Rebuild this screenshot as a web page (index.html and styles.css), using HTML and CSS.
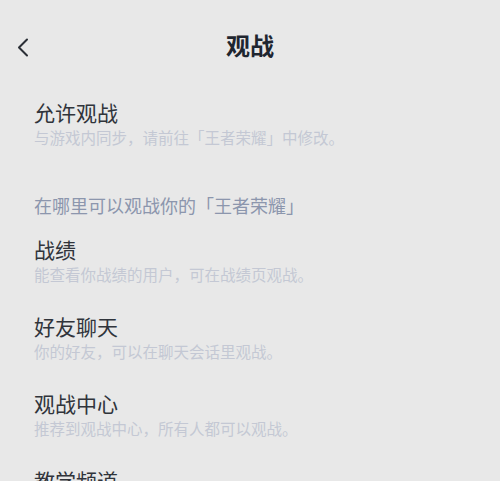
FILE: index.html
```html
<!DOCTYPE html>
<html lang="zh-CN">
<head>
  <meta charset="UTF-8" />
  <meta name="viewport" content="width=device-width, initial-scale=1.0"/>
  <title>观战</title>
  <link rel="stylesheet" href="styles.css">
</head>
<body>

<div class="page">
  <div class="nav">
    <button class="back" aria-label="返回">
      <svg width="12" height="19" viewBox="0 0 12 19">
        <path d="M10 1.5 L2 9.5 L10 17.5" fill="none" stroke="#2b2f36" stroke-width="2" stroke-linecap="round" stroke-linejoin="round"/>
      </svg>
    </button>
    <div class="nav-title">观战</div>
  </div>

  <div class="item first">
    <div class="item-title">允许观战</div>
    <div class="item-desc">与游戏内同步，请前往「王者荣耀」中修改。</div>
  </div>

  <div class="section-title">在哪里可以观战你的「王者荣耀」</div>

  <div class="item">
    <div class="item-title">战绩</div>
    <div class="item-desc">能查看你战绩的用户，可在战绩页观战。</div>
  </div>
  <div class="item">
    <div class="item-title">好友聊天</div>
    <div class="item-desc">你的好友，可以在聊天会话里观战。</div>
  </div>
  <div class="item">
    <div class="item-title">观战中心</div>
    <div class="item-desc">推荐到观战中心，所有人都可以观战。</div>
  </div>
  <div class="item">
    <div class="item-title">教学频道</div>
    <div class="item-desc">教学频道的用户，可以在频道里观战。</div>
  </div>
</div>

</body>
</html>
```

FILE: styles.css
```css
* {
  box-sizing: border-box;
}

body {
  margin: 0;
  background: #e8e8e8;
  font-family: "Noto Sans CJK SC", "Noto Sans", sans-serif;
  overflow: hidden;
}

.page {
  height: 481px;
  overflow: hidden;
}

.nav {
  position: relative;
  height: 90px;
  display: flex;
  align-items: center;
  justify-content: center;
}

.back {
  position: absolute;
  left: 12px;
  top: 36px;
  width: 22px;
  height: 22px;
  padding: 0;
  border: none;
  background: none;
  display: flex;
  align-items: center;
  justify-content: center;
}

.nav-title {
  font-size: 24px;
  font-weight: 700;
  color: #1f2630;
  line-height: 1;
}

.item {
  padding: 0 34px;
  margin-bottom: 28px;
}

.item.first {
  margin-top: 8px;
  margin-bottom: 0;
}

.item-title {
  font-size: 21px;
  line-height: 28px;
  color: #30343b;
}

.item-desc {
  margin-top: 1px;
  font-size: 15.5px;
  line-height: 20px;
  color: #c4c8d4;
  white-space: nowrap;
}

.section-title {
  padding: 0 34px;
  margin: 46px 0 18px;
  font-size: 18px;
  line-height: 24px;
  color: #8c96ad;
}
```
